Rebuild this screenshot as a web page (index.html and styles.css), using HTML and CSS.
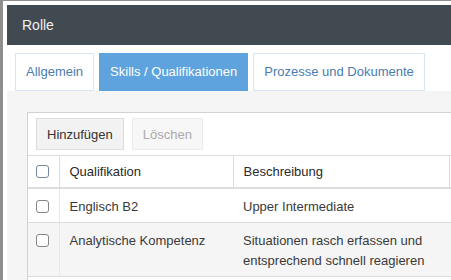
FILE: index.html
```html
<!DOCTYPE html>
<html lang="de">
<head>
    <meta charset="UTF-8">
    <title>Rolle</title>
    <link rel="stylesheet" href="styles.css">
</head>
<body>
    <div class="dialog">
        <header class="dialog-header">Rolle</header>

        <nav class="tabs">
            <a class="tab" href="#allgemein">Allgemein</a>
            <a class="tab active" href="#skills">Skills / Qualifikationen</a>
            <a class="tab" href="#prozesse">Prozesse und Dokumente</a>
        </nav>

        <section class="panel">
            <div class="card">
                <div class="toolbar">
                    <button class="btn">Hinzufügen</button>
                    <button class="btn" disabled>Löschen</button>
                </div>
                <table class="grid">
                    <colgroup>
                        <col class="col-check">
                        <col class="col-name">
                        <col class="col-desc">
                        <col>
                    </colgroup>
                    <thead>
                        <tr>
                            <th><span class="check focus"></span></th>
                            <th>Qualifikation</th>
                            <th>Beschreibung</th>
                            <th></th>
                        </tr>
                    </thead>
                    <tbody>
                        <tr>
                            <td><span class="check"></span></td>
                            <td>Englisch B2</td>
                            <td>Upper Intermediate</td>
                            <td></td>
                        </tr>
                        <tr class="odd">
                            <td><span class="check"></span></td>
                            <td>Analytische Kompetenz</td>
                            <td>Situationen rasch erfassen und<br>entsprechend schnell reagieren</td>
                            <td></td>
                        </tr>
                    </tbody>
                </table>
            </div>
        </section>
    </div>
</body>
</html>
```

FILE: styles.css
```css
html, body {
    margin: 0;
    height: 100%;
    overflow: hidden;
    background-color: #8e8e8e;
    font-family: "Liberation Sans", Arial, sans-serif;
    font-size: 13px;
    color: #3a3a3a;
}

.dialog {
    box-sizing: border-box;
    display: flex;
    flex-direction: column;
    height: calc(100% - 1px);
    margin: 1px 0 0 3px;
    padding: 4px 0 0 4px;
    background-color: #fff;
}

.dialog-header {
    display: flex;
    align-items: center;
    height: 40px;
    padding: 0 15px;
    background-color: #414951;
    color: #f2f2f2;
    font-size: 14px;
}

.tabs {
    display: flex;
    gap: 5px;
    padding: 8px 8px 0;
}

.tab {
    height: 36px;
    line-height: 36px;
    padding: 0 10px;
    border: 1px solid #d8e6f4;
    color: #4a7cb0;
    text-decoration: none;
}

.tab.active {
    background-color: #5ea3dd;
    border-color: #5ea3dd;
    color: #fff;
}

.panel {
    flex: 1;
    min-height: 0;
    padding: 21px 0 0 20px;
    background-color: #f5f5f5;
}

.card {
    height: 100%;
    background-color: #fff;
    border-top: 1px solid #d2d2d2;
    border-left: 1px solid #d2d2d2;
}

.toolbar {
    display: flex;
    gap: 8px;
    padding: 5px 8px 5px;
}

.btn {
    height: 32px;
    padding: 0 10px;
    font-family: inherit;
    font-size: 13px;
    color: #333;
    background-color: #f2f2f2;
    border: 1px solid #dcdcdc;
}

.btn:disabled {
    color: #aaa;
    background-color: #f7f7f7;
    border-color: #ebebeb;
}

.grid {
    width: 100%;
    table-layout: fixed;
    border-collapse: collapse;
}

.col-check { width: 31px; }
.col-name { width: 174px; }
.col-desc { width: 216px; }

.grid th, .grid td {
    padding: 8px 10px 5px;
    line-height: 20px;
    text-align: left;
    vertical-align: top;
    font-weight: normal;
    border-bottom: 1px solid #ddd;
}

.grid th {
    padding: 6px 10px 5px;
    color: #2a2a2a;
    border-top: 1px solid #ddd;
    border-right: 1px solid #ddd;
    border-bottom: 2px solid #ddd;
}

.grid th:last-child {
    border-right: none;
}

.grid th:first-child, .grid td:first-child {
    padding-left: 8px;
    padding-right: 8px;
}

.grid td:first-child {
    border-right: 1px solid #e8e8e8;
}

.grid tr.odd td {
    background-color: #f5f5f5;
}

.check {
    display: block;
    width: 11px;
    height: 11px;
    margin-top: 3px;
    border: 1px solid #858585;
    border-radius: 3px;
    background-color: #fff;
}

.check.focus {
    border-color: #7486a0;
}
```
